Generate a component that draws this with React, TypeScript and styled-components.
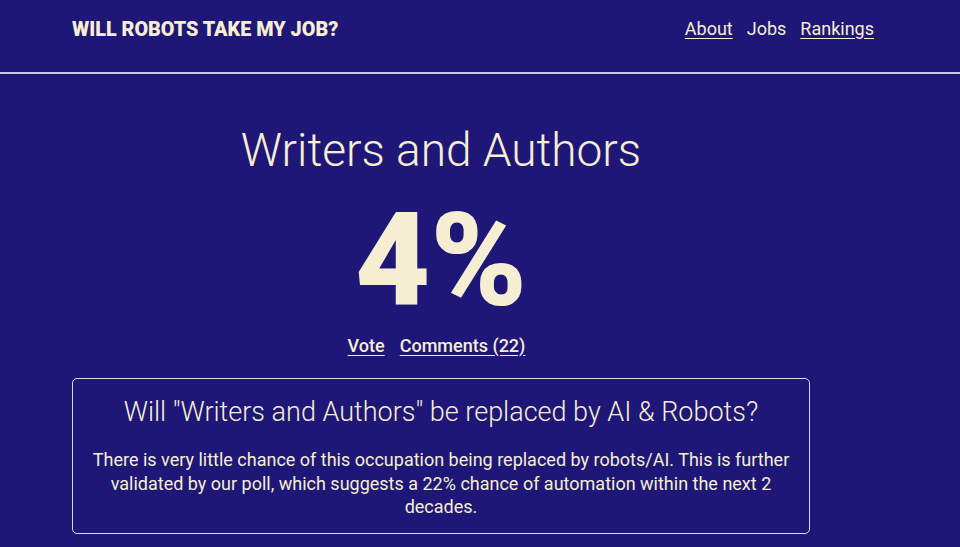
import styled, { createGlobalStyle } from "styled-components";

const GlobalStyle = createGlobalStyle`
  html, body {
    margin: 0;
    padding: 0;
    background: #1e1777;
    font-family: Roboto, "Liberation Sans", sans-serif;
    color: #f6eed3;
  }
`;

const Header = styled.header`
  height: 72px;
  border-bottom: 2px solid #c9c4e6;
  display: flex;
  align-items: center;
  justify-content: space-between;
  padding: 0 86px 0 72px;
`;

const Brand = styled.a`
  font-size: 19.8px;
  font-weight: 900;
  color: #f6eed3;
  text-decoration: none;
  margin-top: -14px;
`;

const Nav = styled.nav`
  display: flex;
  gap: 14px;
  margin-top: -16px;
`;

const NavLink = styled.a<{ $plain?: boolean }>`
  font-size: 18px;
  color: #f6eed3;
  text-decoration: ${(p) => (p.$plain ? "none" : "underline")};
  text-underline-offset: 3px;
`;

const Main = styled.main`
  width: 738px;
  margin-left: 72px;
  display: flex;
  flex-direction: column;
  align-items: center;
`;

const Title = styled.h1`
  margin: 48px 0 0;
  font-size: 46px;
  font-weight: 300;
  line-height: 56px;
`;

const Percent = styled.div`
  font-size: 130px;
  font-weight: 900;
  line-height: 130px;
  margin-top: 18px;
`;

const Links = styled.div`
  display: flex;
  gap: 15px;
  margin-top: 9px;
  margin-right: 9px;
  line-height: 22px;
`;

const Link = styled.a`
  font-size: 18px;
  font-weight: 500;
  color: #f6eed3;
  text-decoration: underline;
  text-underline-offset: 3px;
`;

const Card = styled.section`
  align-self: stretch;
  margin-top: 21px;
  border: 1px solid #dcd8ee;
  border-radius: 5px;
  padding: 16px 12px 14px;
  text-align: center;
`;

const CardTitle = styled.h2`
  margin: 0;
  font-size: 27px;
  font-weight: 300;
  line-height: 34px;
`;

const CardText = styled.p`
  margin: 19px 0 0;
  font-size: 18px;
  line-height: 23.5px;
`;

export default function App() {
  return (
    <>
      <GlobalStyle />
      <Header>
        <Brand href="#">WILL ROBOTS TAKE MY JOB?</Brand>
        <Nav>
          <NavLink href="#">About</NavLink>
          <NavLink href="#" $plain>
            Jobs
          </NavLink>
          <NavLink href="#">Rankings</NavLink>
        </Nav>
      </Header>
      <Main>
        <Title>Writers and Authors</Title>
        <Percent>4%</Percent>
        <Links>
          <Link href="#">Vote</Link>
          <Link href="#">Comments (22)</Link>
        </Links>
        <Card>
          <CardTitle>Will "Writers and Authors" be replaced by AI &amp; Robots?</CardTitle>
          <CardText>
            There is very little chance of this occupation being replaced by robots/AI. This is
            further validated by our poll, which suggests a 22% chance of automation within the
            next 2 decades.
          </CardText>
        </Card>
      </Main>
    </>
  );
}
